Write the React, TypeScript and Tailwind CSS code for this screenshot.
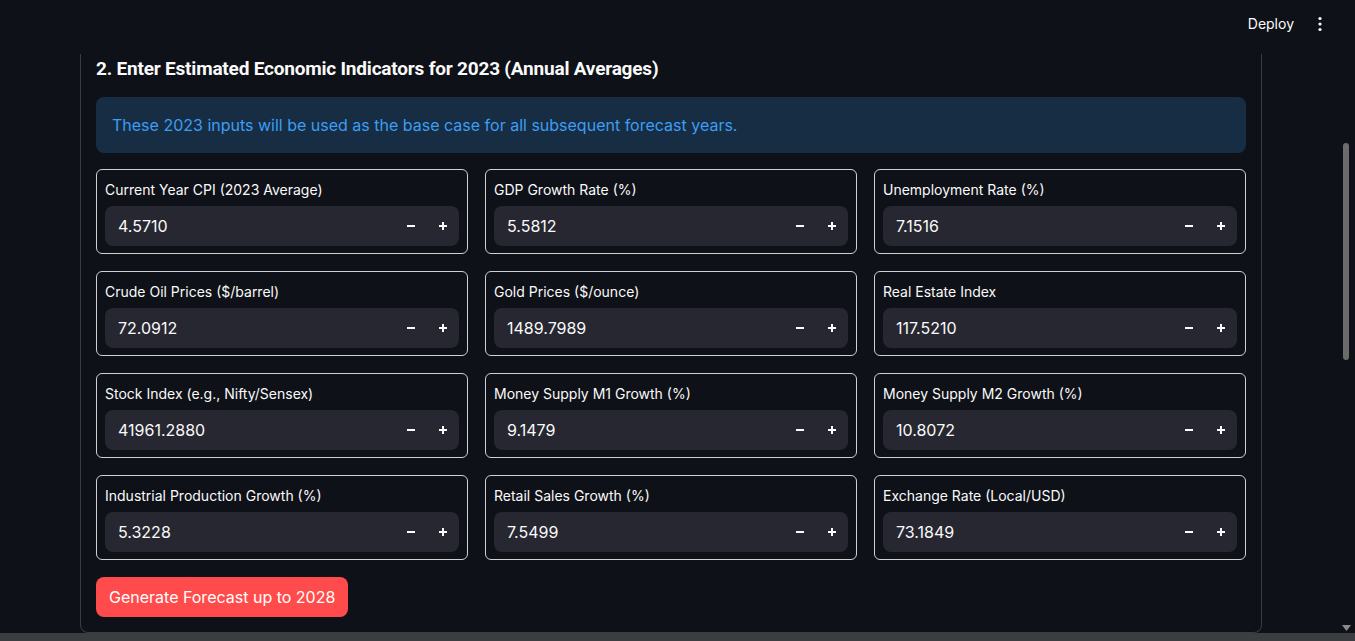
import React from 'react';

const fields: { label: string; value: string }[] = [
  { label: 'Current Year CPI (2023 Average)', value: '4.5710' },
  { label: 'GDP Growth Rate (%)', value: '5.5812' },
  { label: 'Unemployment Rate (%)', value: '7.1516' },
  { label: 'Crude Oil Prices ($/barrel)', value: '72.0912' },
  { label: 'Gold Prices ($/ounce)', value: '1489.7989' },
  { label: 'Real Estate Index', value: '117.5210' },
  { label: 'Stock Index (e.g., Nifty/Sensex)', value: '41961.2880' },
  { label: 'Money Supply M1 Growth (%)', value: '9.1479' },
  { label: 'Money Supply M2 Growth (%)', value: '10.8072' },
  { label: 'Industrial Production Growth (%)', value: '5.3228' },
  { label: 'Retail Sales Growth (%)', value: '7.5499' },
  { label: 'Exchange Rate (Local/USD)', value: '73.1849' },
];

export default function App() {
  return (
    <div className="w-[1355px] h-[641px] overflow-hidden bg-[#0e1117] flex flex-col font-['Inter',sans-serif] text-[#fafafa]">
      <div className="flex-1 flex min-h-0">
        <div className="flex-1 flex flex-col">
          <header className="h-[54px] flex items-start justify-end pt-[14px] pr-[18px]">
            <span className="text-[14px] leading-[20px]">Deploy</span>
            <Kebab />
          </header>

          <section className="ml-[80px] w-[1182px] border border-t-0 border-[#3a3c43] rounded-b-lg px-[15px] pb-[15px]">
            <h3 className="mt-[1px] h-[28px] leading-[28px] text-[19px] font-bold font-['Roboto',sans-serif] tracking-[-0.2px]">
              2. Enter Estimated Economic Indicators for 2023 (Annual Averages)
            </h3>

            <div className="mt-[14px] h-[56px] rounded-lg bg-[#172d43] px-[16px] flex items-center">
              <p className="text-[16px] text-[#3d9df3]">
                These 2023 inputs will be used as the base case for all subsequent forecast years.
              </p>
            </div>

            <div className="mt-[16px] grid grid-cols-3 gap-[17px]">
              {fields.map((f) => (
                <NumberField key={f.label} label={f.label} value={f.value} />
              ))}
            </div>

            <button
              type="button"
              className="mt-[17px] h-[40px] px-[13px] rounded-lg bg-[#ff4b4b] text-white text-[16px]"
            >
              Generate Forecast up to 2028
            </button>
          </section>
        </div>

        {/* scrollbar */}
        <div className="w-[15px] flex flex-col items-center">
          <div className="h-[143px]" />
          <div className="ml-[-3px] w-[6px] h-[217px] rounded-full bg-[#6b6b6b]" />
          <div className="flex-1" />
          <svg width="9" height="6" viewBox="0 0 9 6" className="mb-[2px] ml-[-2px]">
            <path d="M0 0H9L4.5 6Z" fill="#8a8a8a" />
          </svg>
        </div>
      </div>
      <div className="h-[8px] bg-[#3b3d41]" />
    </div>
  );
}

function NumberField({ label, value }: { label: string; value: string }) {
  return (
    <div className="h-[85px] border border-[#cfd0d4] rounded-md px-[8px] pt-[10px]">
      <p className="text-[14px] leading-[20px]">{label}</p>
      <div className="mt-[6px] h-[40px] rounded-lg bg-[#262730] flex items-center">
        <span className="flex-1 pl-[13px] text-[16px]">{value}</span>
        <button type="button" className="w-[32px] h-[40px] flex items-center justify-center">
          <svg width="10" height="10" viewBox="0 0 10 10">
            <path d="M1 5H9" stroke="#fafafa" strokeWidth="2" />
          </svg>
        </button>
        <button type="button" className="w-[32px] h-[40px] flex items-center justify-center">
          <svg width="10" height="10" viewBox="0 0 10 10">
            <path d="M1 5H9M5 1V9" stroke="#fafafa" strokeWidth="2" />
          </svg>
        </button>
      </div>
    </div>
  );
}

function Kebab() {
  return (
    <svg width="4" height="16" viewBox="0 0 4 16" className="ml-[24px] mt-[2px]">
      <circle cx="2" cy="2.5" r="1.6" fill="#fafafa" />
      <circle cx="2" cy="8" r="1.6" fill="#fafafa" />
      <circle cx="2" cy="13.5" r="1.6" fill="#fafafa" />
    </svg>
  );
}
